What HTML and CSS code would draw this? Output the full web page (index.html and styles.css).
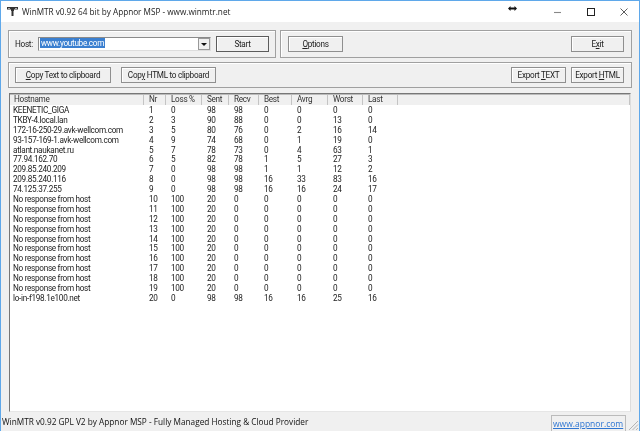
FILE: index.html
```html
<!DOCTYPE html>
<html lang="en">
<head>
  <meta charset="UTF-8" />
  <title>WinMTR</title>
  <link rel="stylesheet" href="styles.css">
</head>
<body>
  <div class="window">
    <header class="titlebar">
      <svg class="app-icon" width="11" height="9" viewBox="0 0 11 9">
        <path d="M0 0h11v2.500H7V4H6.500v5h-2V4H4V2.500H0z" fill="#333"/>
        <path d="M1 1h2v1H1zM8 1h2v1H8z" fill="#aaa"/>
      </svg>
      <span class="title-text">WinMTR v0.92 64 bit by Appnor MSP - www.winmtr.net</span>
      <div class="window-controls">
        <svg width="8" height="8" viewBox="0 0 8 8"><path d="M0 4.500h7" stroke="#888" stroke-width="1.100"/></svg>
        <svg width="8" height="8" viewBox="0 0 8 8"><rect x=".5" y=".5" width="7" height="7" fill="none" stroke="#222"/></svg>
        <svg width="8" height="8" viewBox="0 0 8 8"><path d="M.5.5l7 7M7.500.5l-7 7" stroke="#333" stroke-width=".8"/></svg>
      </div>
    </header>

    <main class="client">
      <div class="top-row">
        <section class="group host-group">
          <label class="host-label">Host:</label>
          <div class="combo">
            <span class="combo-value"><span class="selected">www.youtube.com</span></span>
            <span class="combo-arrow"></span>
          </div>
          <button class="btn btn-start">Start</button>
        </section>
        <section class="group options-group">
          <button class="btn btn-options"><u>O</u>ptions</button>
          <button class="btn btn-exit">E<u>x</u>it</button>
        </section>
      </div>

      <section class="group export-group">
        <button class="btn btn-copy-text"><u>C</u>opy Text to clipboard</button>
        <button class="btn btn-copy-html">Cop<u>y</u> HTML to clipboard</button>
        <button class="btn btn-export-text">Export <u>T</u>EXT</button>
        <button class="btn btn-export-html">Export <u>H</u>TML</button>
      </section>

      <section class="list">
        <div class="list-row list-head">
          <span>Hostname</span><span>Nr</span><span>Loss %</span><span>Sent</span><span>Recv</span><span>Best</span><span>Avrg</span><span>Worst</span><span>Last</span><span></span>
        </div>
        <div class="list-body">
          <div class="list-row"><span>KEENETIC_GIGA</span><span>1</span><span>0</span><span>98</span><span>98</span><span>0</span><span>0</span><span>0</span><span>0</span></div>
          <div class="list-row"><span>TKBY-4.local.lan</span><span>2</span><span>3</span><span>90</span><span>88</span><span>0</span><span>0</span><span>13</span><span>0</span></div>
          <div class="list-row"><span>172-16-250-29.avk-wellcom.com</span><span>3</span><span>5</span><span>80</span><span>76</span><span>0</span><span>2</span><span>16</span><span>14</span></div>
          <div class="list-row"><span>93-157-169-1.avk-wellcom.com</span><span>4</span><span>9</span><span>74</span><span>68</span><span>0</span><span>1</span><span>19</span><span>0</span></div>
          <div class="list-row"><span>atlant.naukanet.ru</span><span>5</span><span>7</span><span>78</span><span>73</span><span>0</span><span>4</span><span>63</span><span>1</span></div>
          <div class="list-row"><span>77.94.162.70</span><span>6</span><span>5</span><span>82</span><span>78</span><span>1</span><span>5</span><span>27</span><span>3</span></div>
          <div class="list-row"><span>209.85.240.209</span><span>7</span><span>0</span><span>98</span><span>98</span><span>1</span><span>1</span><span>12</span><span>2</span></div>
          <div class="list-row"><span>209.85.240.116</span><span>8</span><span>0</span><span>98</span><span>98</span><span>16</span><span>33</span><span>83</span><span>16</span></div>
          <div class="list-row"><span>74.125.37.255</span><span>9</span><span>0</span><span>98</span><span>98</span><span>16</span><span>16</span><span>24</span><span>17</span></div>
          <div class="list-row"><span>No response from host</span><span>10</span><span>100</span><span>20</span><span>0</span><span>0</span><span>0</span><span>0</span><span>0</span></div>
          <div class="list-row"><span>No response from host</span><span>11</span><span>100</span><span>20</span><span>0</span><span>0</span><span>0</span><span>0</span><span>0</span></div>
          <div class="list-row"><span>No response from host</span><span>12</span><span>100</span><span>20</span><span>0</span><span>0</span><span>0</span><span>0</span><span>0</span></div>
          <div class="list-row"><span>No response from host</span><span>13</span><span>100</span><span>20</span><span>0</span><span>0</span><span>0</span><span>0</span><span>0</span></div>
          <div class="list-row"><span>No response from host</span><span>14</span><span>100</span><span>20</span><span>0</span><span>0</span><span>0</span><span>0</span><span>0</span></div>
          <div class="list-row"><span>No response from host</span><span>15</span><span>100</span><span>20</span><span>0</span><span>0</span><span>0</span><span>0</span><span>0</span></div>
          <div class="list-row"><span>No response from host</span><span>16</span><span>100</span><span>20</span><span>0</span><span>0</span><span>0</span><span>0</span><span>0</span></div>
          <div class="list-row"><span>No response from host</span><span>17</span><span>100</span><span>20</span><span>0</span><span>0</span><span>0</span><span>0</span><span>0</span></div>
          <div class="list-row"><span>No response from host</span><span>18</span><span>100</span><span>20</span><span>0</span><span>0</span><span>0</span><span>0</span><span>0</span></div>
          <div class="list-row"><span>No response from host</span><span>19</span><span>100</span><span>20</span><span>0</span><span>0</span><span>0</span><span>0</span><span>0</span></div>
          <div class="list-row"><span>lo-in-f198.1e100.net</span><span>20</span><span>0</span><span>98</span><span>98</span><span>16</span><span>16</span><span>25</span><span>16</span></div>
        </div>
      </section>
    </main>

    <footer class="statusbar">
      <span class="status-text">WinMTR v0.92 GPL V2 by Appnor MSP - Fully Managed Hosting &amp; Cloud Provider</span>
      <a class="status-link" href="#">www.appnor.com</a>
      <svg class="grip" width="12" height="12" viewBox="0 0 12 12"><path d="M11 2L2 11M11 5.500L5.500 11M11 9L9 11" stroke="#b4b4b4"/></svg>
    </footer>

    <svg class="cursor" width="9" height="5" viewBox="0 0 9 5"><path d="M0 2.500L2.500 0v1.500h4V0L9 2.500 6.500 5V3.500h-4V5z" fill="#111"/></svg>
  </div>
</body>
</html>
```

FILE: styles.css
```css
* {
  box-sizing: border-box;
}

html, body {
  margin: 0;
  height: 100%;
}

body {
  font-family: Roboto, "Liberation Sans", sans-serif;
  font-size: 8.2px;
  letter-spacing: -0.3px;
  color: #222;
  background: #f0f0f0;
  overflow: hidden;
}

.window {
  position: relative;
  width: 640px;
  height: 431px;
  display: flex;
  flex-direction: column;
  border: 1px solid #5fa8ea;
  border-bottom: 0;
  background: #f0f0f0;
  filter: blur(0.3px);
}

.titlebar {
  height: 21px;
  flex: none;
  display: flex;
  align-items: center;
  background: #fff;
  padding-left: 6px;
}

.app-icon {
  margin-right: 4px;
}

.title-text {
  font-family: "Open Sans", sans-serif;
  font-size: 8.2px;
  letter-spacing: 0;
  color: #222;
}

.window-controls {
  margin-left: auto;
  display: flex;
  gap: 25px;
  padding-right: 11px;
}

.client {
  flex: 1;
  min-height: 0;
  display: flex;
  flex-direction: column;
  padding: 8px 7px 0 7px;
}

.top-row {
  display: flex;
  gap: 4px;
}

.group {
  border: 1px solid #a0a0a0;
  box-shadow: inset 1px 1px 0 #fff;
  display: flex;
  align-items: center;
}

.host-group {
  width: 268px;
  height: 28px;
  padding: 0 6px 0 6px;
}

.host-label {
  width: 23px;
}

.combo {
  width: 173px;
  height: 14px;
  display: flex;
  background: #fff;
  border: 1px solid #8a8a8a;
  border-right-color: #ddd;
  border-bottom-color: #ddd;
}

.combo-value {
  flex: 1;
  padding-left: 1px;
  line-height: 11px;
}

.selected {
  background: #3a7fd0;
  color: #fff;
  display: inline-block;
  height: 10px;
  line-height: 10px;
  padding: 0 1px;
}

.combo-arrow {
  width: 12px;
  background: #f0f0f0;
  border: 1px solid #999;
  position: relative;
}

.combo-arrow::after {
  content: "";
  position: absolute;
  left: 2px;
  top: 4px;
  border: 3px solid transparent;
  border-top: 3px solid #111;
  border-bottom: 0;
}

.btn {
  height: 16px;
  padding: 0;
  font: inherit;
  letter-spacing: inherit;
  color: #222;
  background: #f0f0f0;
  border: 1px solid #8f8f8f;
  box-shadow: inset 1px 1px 0 #fff;
}

.btn-start {
  width: 53px;
  margin-left: 5px;
  border-color: #5c5c5c;
}

.options-group {
  flex: 1;
  height: 28px;
  padding: 0 7px;
  justify-content: space-between;
}

.btn-options {
  width: 55px;
}

.btn-exit {
  width: 53px;
}

.export-group {
  height: 26px;
  margin-top: 4px;
  padding: 0 7px 0 6px;
}

.btn-copy-text {
  width: 96px;
}

.btn-copy-html {
  width: 95px;
  margin-left: 10px;
}

.btn-export-text {
  width: 55px;
  margin-left: auto;
}

.btn-export-html {
  width: 53px;
  margin-left: 5px;
}

.list {
  flex: 1;
  min-height: 0;
  margin: 5px 1px 0 1px;
  background: #fff;
  border: 1px solid #777;
  border-right-color: #ddd;
  border-bottom-color: #e6e6e6;
}

.list-row {
  display: grid;
  grid-template-columns: 134px 22px 36px 27px 30px 33px 36px 35px 35px 1fr;
  height: 9.9px;
  line-height: 10px;
  white-space: nowrap;
}

.list-row span {
  padding-left: 5px;
}

.list-row span:first-child {
  padding-left: 3px;
}

.list-head {
  height: 11px;
  background: #f0f0f0;
  border-top: 1px solid #bbb;
  color: #333;
}

.list-head span {
  border-right: 1px solid #c4c4c4;
  line-height: 9px;
}

.list-head span:first-child {
  padding-left: 4px;
}

.statusbar {
  height: 19px;
  flex: none;
  display: flex;
  align-items: center;
  position: relative;
  padding-left: 1px;
  background: #f0f0f0;
}

.status-text {
  font-family: "Open Sans", sans-serif;
  font-size: 8.25px;
  letter-spacing: 0;
  color: #111;
}

.status-link {
  margin-left: auto;
  margin-right: 13px;
  align-self: flex-end;
  width: 75px;
  height: 16px;
  line-height: 16px;
  padding-left: 1px;
  font-family: "Open Sans", sans-serif;
  font-size: 8.5px;
  letter-spacing: 0;
  color: #2f76d2;
  border-top: 1px solid #bbb;
  border-left: 1px solid #bbb;
  border-right: 1px solid #bbb;
}

.grip {
  position: absolute;
  right: 0;
  bottom: 0;
}

.cursor {
  position: absolute;
  left: 507px;
  top: 5px;
}
```
